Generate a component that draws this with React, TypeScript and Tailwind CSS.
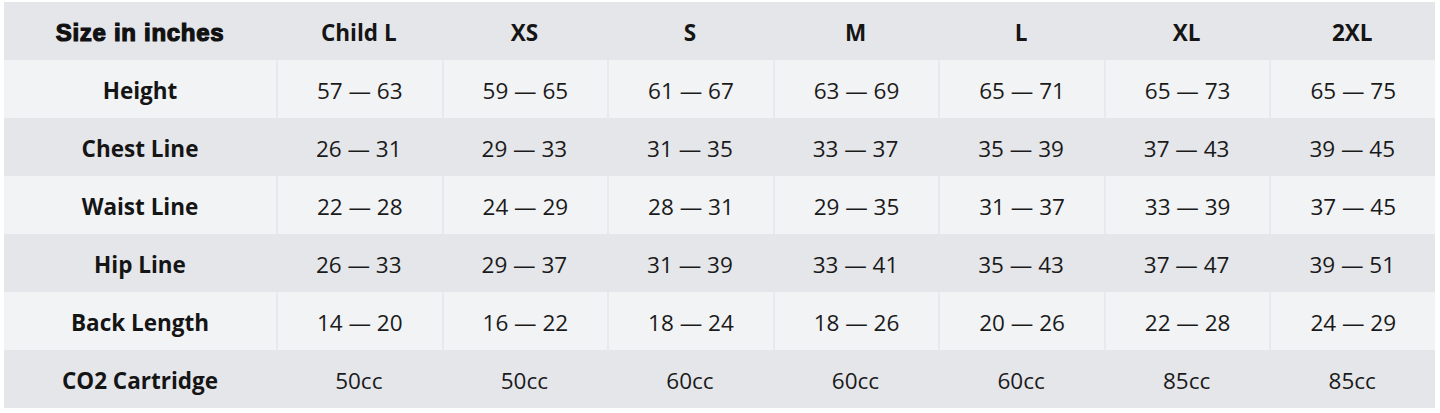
import React from 'react';

const sizes = ['Child L', 'XS', 'S', 'M', 'L', 'XL', '2XL'];

const rows: { label: string; values: string[] }[] = [
  { label: 'Height', values: ['57 — 63', '59 — 65', '61 — 67', '63 — 69', '65 — 71', '65 — 73', '65 — 75'] },
  { label: 'Chest Line', values: ['26 — 31', '29 — 33', '31 — 35', '33 — 37', '35 — 39', '37 — 43', '39 — 45'] },
  { label: 'Waist Line', values: ['22 — 28', '24 — 29', '28 — 31', '29 — 35', '31 — 37', '33 — 39', '37 — 45'] },
  { label: 'Hip Line', values: ['26 — 33', '29 — 37', '31 — 39', '33 — 41', '35 — 43', '37 — 47', '39 — 51'] },
  { label: 'Back Length', values: ['14 — 20', '16 — 22', '18 — 24', '18 — 26', '20 — 26', '22 — 28', '24 — 29'] },
  { label: 'CO2 Cartridge', values: ['50cc', '50cc', '60cc', '60cc', '60cc', '85cc', '85cc'] },
];

const App: React.FC = () => {
  return (
    <div className="w-[1440px] h-[413px] bg-white pt-[2px] px-[4px] font-['Open_Sans',sans-serif]">
      <div className="w-[1431px] grid grid-cols-[272px_repeat(7,1fr)]">
        {/* header */}
        <div className="h-[58px] pt-[3px] bg-[#e5e6ea] flex items-center justify-center text-[24px] font-black text-[#111] font-['Liberation_Sans',Arial,sans-serif] [-webkit-text-stroke:1.2px_#111] tracking-[0.7px]">
          Size in inches
        </div>
        {sizes.map((s) => (
          <div key={s} className="h-[58px] pt-[3px] bg-[#e5e6ea] flex items-center justify-center text-[22.5px] font-bold text-[#151515]">
            {s}
          </div>
        ))}

        {rows.map((row, i) => {
          const light = i % 2 === 0;
          const bg = light ? 'bg-[#f2f3f5]' : 'bg-[#e5e6ea]';
          return (
            <React.Fragment key={row.label}>
              <div className={`h-[58px] pt-[3px] ${bg} flex items-center justify-center text-[22.5px] font-bold text-[#151515]`}>
                {row.label}
              </div>
              {row.values.map((v, j) => (
                <div
                  key={j}
                  className={`h-[58px] pt-[3px] ${bg} flex items-center justify-center text-[22.5px] text-[#1a1a1a] ${light ? 'border-l-2 border-[#e8e9ec]' : ''}`}
                >
                  {v}
                </div>
              ))}
            </React.Fragment>
          );
        })}
      </div>
    </div>
  );
};

export default App;
